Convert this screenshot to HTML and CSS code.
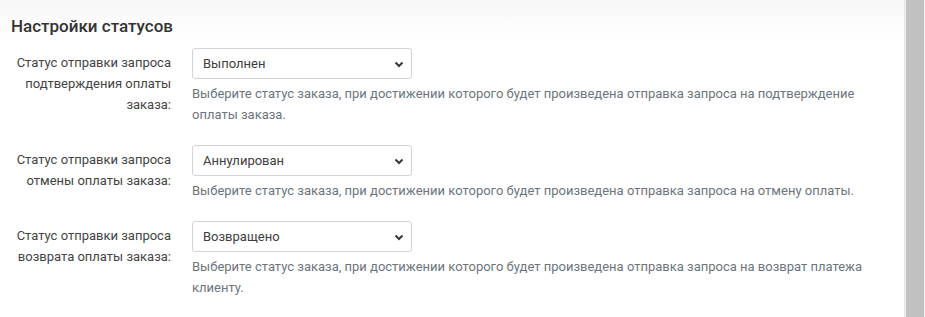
FILE: index.html
```html
<!DOCTYPE html>
<html lang="ru">
<head>
    <meta charset="UTF-8">
    <title>Настройки статусов</title>
    <link rel="stylesheet" href="styles.css">
</head>
<body>
    <div class="page">
        <div class="settings">
            <h3 class="settings-title">Настройки статусов</h3>

            <div class="form-row">
                <label class="form-label">Статус отправки запроса подтверждения оплаты заказа:</label>
                <div class="form-field">
                    <div class="select">
                        <span>Выполнен</span>
                        <svg class="chevron" width="10" height="7" viewBox="0 0 10 7"><path d="M1.5 1.5 L5 5 L8.5 1.5" fill="none" stroke="#343a40" stroke-width="2"/></svg>
                    </div>
                    <div class="help">Выберите статус заказа, при достижении которого будет произведена отправка запроса на подтверждение оплаты заказа.</div>
                </div>
            </div>

            <div class="form-row">
                <label class="form-label">Статус отправки запроса отмены оплаты заказа:</label>
                <div class="form-field">
                    <div class="select">
                        <span>Аннулирован</span>
                        <svg class="chevron" width="10" height="7" viewBox="0 0 10 7"><path d="M1.5 1.5 L5 5 L8.5 1.5" fill="none" stroke="#343a40" stroke-width="2"/></svg>
                    </div>
                    <div class="help">Выберите статус заказа, при достижении которого будет произведена отправка запроса на отмену оплаты.</div>
                </div>
            </div>

            <div class="form-row">
                <label class="form-label">Статус отправки запроса возврата оплаты заказа:</label>
                <div class="form-field">
                    <div class="select">
                        <span>Возвращено</span>
                        <svg class="chevron" width="10" height="7" viewBox="0 0 10 7"><path d="M1.5 1.5 L5 5 L8.5 1.5" fill="none" stroke="#343a40" stroke-width="2"/></svg>
                    </div>
                    <div class="help">Выберите статус заказа, при достижении которого будет произведена отправка запроса на возврат платежа клиенту.</div>
                </div>
            </div>
        </div>
        <div class="scrollbar"><div class="scrollbar-thumb"></div></div>
    </div>
</body>
</html>
```

FILE: styles.css
```css
body, html {
    margin: 0;
    padding: 0;
    height: 100%;
    overflow: hidden;
}
body {
    font-family: Roboto, "Liberation Sans", sans-serif;
    font-size: 13px;
    color: #333;
    background: #fff;
}
.page {
    display: flex;
    height: 100%;
}
.settings {
    flex: 1;
    background: linear-gradient(to bottom, #f7f7f7 0, #fff 40px);
}
.settings-title {
    margin: 0;
    padding: 16px 11px 0;
    font-size: 17px;
    font-weight: 500;
    color: #333;
    line-height: 20px;
}
.form-row {
    display: flex;
    margin-top: 12px;
    margin-bottom: 20px;
}
.form-row + .form-row {
    margin-top: 0;
}
.form-label {
    width: 160px;
    padding-left: 11px;
    padding-top: 4px;
    text-align: right;
    line-height: 21px;
    color: #444;
}
.form-field {
    margin-left: 21px;
}
.select {
    box-sizing: border-box;
    width: 220px;
    height: 31px;
    border: 1px solid #ced4da;
    border-radius: 3px;
    background: #fff;
    display: flex;
    align-items: center;
    justify-content: space-between;
    padding: 0 7px 0 10px;
    color: #3d3d3d;
}
.chevron {
    margin-top: 1px;
}
.help {
    margin-top: 4px;
    line-height: 21px;
    color: #6c757d;
    max-width: 680px;
}
.scrollbar {
    width: 21px;
    background: #f1f1f1;
    border-left: 1px solid #e6e6e6;
    box-sizing: border-box;
    display: flex;
}
.scrollbar-thumb {
    flex: 1;
    margin: 0 1px 0 1px;
    background: #c1c1c1;
}
```
